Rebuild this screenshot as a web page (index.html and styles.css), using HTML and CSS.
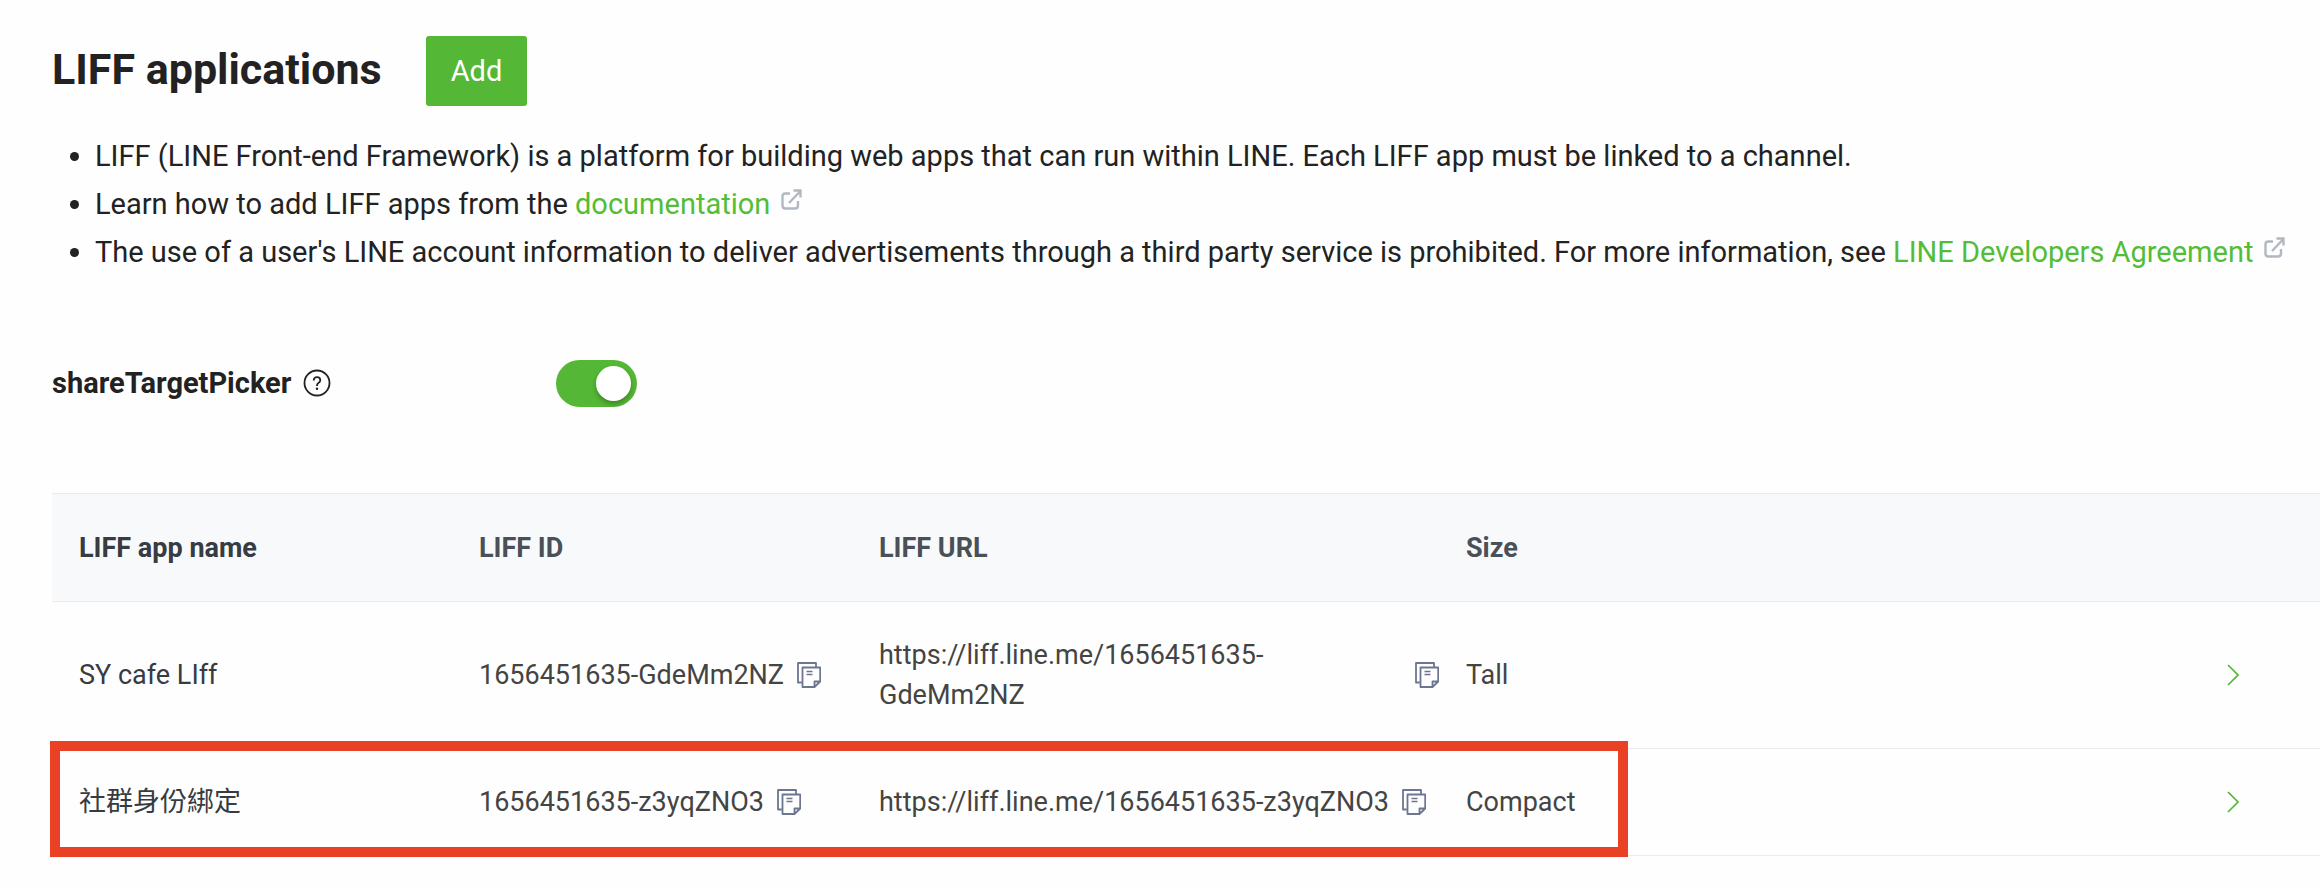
FILE: index.html
```html
<!DOCTYPE html>
<html lang="en">
<head>
<meta charset="utf-8">
<title>LIFF applications</title>
<link rel="stylesheet" href="styles.css">
</head>
<body>
<svg class="sprite" aria-hidden="true">
  <symbol id="external" viewBox="0 0 21 21">
    <path d="M9 4.500H4.500Q1.500 4.500 1.500 7.500V16.500Q1.500 19.500 4.500 19.500H14Q17 19.500 17 16.500V12M8 14L18.500 3M12.500 1.500H19.500V8.500" fill="none" stroke="currentColor" stroke-width="2.400"/>
  </symbol>
  <symbol id="copy" viewBox="0 0 24 26">
    <path d="M4.500 20.500H1V1H19V4.500M5.500 5.500H23.200V19.500L17.500 25H5.500ZM17.500 25V19.500H23.200" fill="none" stroke="currentColor" stroke-width="1.800" stroke-linejoin="round"/>
    <path d="M9.500 9.500H15.500M9.500 12.500H15.500" fill="none" stroke="currentColor" stroke-width="1.500"/>
  </symbol>
  <symbol id="chevron" viewBox="0 0 12 22">
    <path d="M1 1L11 11L1 21" fill="none" stroke="currentColor" stroke-width="1.700"/>
  </symbol>
</svg>
<main class="page">
  <header class="heading">
    <h1 class="title">LIFF applications</h1>
    <button class="add" type="button">Add</button>
  </header>
  <ul class="notes">
    <li>LIFF (LINE Front-end Framework) is a platform for building web apps that can run within LINE. Each LIFF app must be linked to a channel.</li>
    <li>Learn how to add LIFF apps from the <a class="link" href="#documentation">documentation<svg class="external"><use href="#external"/></svg></a></li>
    <li>The use of a user's LINE account information to deliver advertisements through a third party service is prohibited. For more information, see <a class="link" href="#agreement">LINE Developers Agreement<svg class="external"><use href="#external"/></svg></a></li>
  </ul>
  <div class="setting">
    <div class="setting-name">
      <label for="picker">shareTargetPicker</label>
      <button class="help" type="button" aria-label="Help">
        <svg class="help-icon" viewBox="0 0 28 28"><circle cx="14" cy="14" r="12.500" fill="none" stroke="currentColor" stroke-width="1.800"/><path d="M10.700 11.500Q10.700 8.200 14 8.200Q17.300 8.200 17.300 11.200Q17.300 12.800 15.400 14Q14 14.900 14 16.500V17" fill="none" stroke="currentColor" stroke-width="1.800"/><circle cx="14" cy="19.700" r="1.200" fill="currentColor"/></svg>
      </button>
    </div>
    <input class="switch" id="picker" type="checkbox" role="switch" checked>
  </div>
  <table class="apps">
    <colgroup><col class="col-name"><col class="col-id"><col class="col-url"><col class="col-size"><col></colgroup>
    <thead>
      <tr><th class="name">LIFF app name</th><th>LIFF ID</th><th>LIFF URL</th><th>Size</th><th></th></tr>
    </thead>
    <tbody>
      <tr>
        <td class="name">SY cafe LIff</td>
        <td><div class="copyable"><span>1656451635-GdeMm2NZ</span><button class="copy" type="button" aria-label="Copy LIFF ID"><svg class="copy-icon"><use href="#copy"/></svg></button></div></td>
        <td><div class="copyable"><span>https://liff.line.me/1656451635-GdeMm2NZ</span><button class="copy" type="button" aria-label="Copy LIFF URL"><svg class="copy-icon"><use href="#copy"/></svg></button></div></td>
        <td>Tall</td>
        <td class="open"><a class="chevron" href="#app1" aria-label="Open app"><svg class="chevron-icon"><use href="#chevron"/></svg></a></td>
      </tr>
      <tr class="marked">
        <td class="name">社群身份綁定<span class="marker"></span></td>
        <td><div class="copyable"><span>1656451635-z3yqZNO3</span><button class="copy" type="button" aria-label="Copy LIFF ID"><svg class="copy-icon"><use href="#copy"/></svg></button></div></td>
        <td><div class="copyable"><span>https://liff.line.me/1656451635-z3yqZNO3</span><button class="copy" type="button" aria-label="Copy LIFF URL"><svg class="copy-icon"><use href="#copy"/></svg></button></div></td>
        <td>Compact</td>
        <td class="open"><a class="chevron" href="#app2" aria-label="Open app"><svg class="chevron-icon"><use href="#chevron"/></svg></a></td>
      </tr>
    </tbody>
  </table>
</main>
</body>
</html>
```
FILE: styles.css
```css
* { box-sizing: border-box; }
body {
  margin: 0;
  background: #fefefe;
  color: #222;
  font: 29px/48px Roboto, "Noto Sans CJK TC", sans-serif;
}
button { border: 0; padding: 0; background: none; color: inherit; font: inherit; cursor: pointer; }
.sprite { position: absolute; width: 0; height: 0; }
.page { padding: 36px 0 32px 52px; }
.heading { display: flex; align-items: flex-start; gap: 44px; }
.title { margin: 0; font-size: 43px; line-height: 66px; font-weight: 700; }
.add { height: 70px; padding: 0 25px; border-radius: 3px; background: #54b735; color: #fff; }
.notes { margin: 26px 0 0; padding: 0 0 0 43px; }
.link { color: #53bd36; text-decoration: none; }
.external { width: 21px; height: 21px; margin-left: 11px; vertical-align: 4px; color: #b0b8c1; }
.setting { display: flex; align-items: center; margin-top: 83px; }
.setting-name { display: flex; align-items: center; gap: 12px; width: 504px; font-weight: 700; }
.help { display: flex; }
.help-icon { width: 28px; height: 28px; }
.switch {
  appearance: none;
  display: flex;
  align-items: center;
  justify-content: flex-end;
  width: 81px;
  height: 47px;
  margin: 0;
  padding: 6px;
  border-radius: 24px;
  background: #54b735;
}
.switch::before {
  content: "";
  width: 35px;
  height: 35px;
  border-radius: 50%;
  background: #fff;
  box-shadow: 0 3px 5px #0004;
}
.switch:not(:checked) { justify-content: flex-start; background: #b0b8c1; }
.apps {
  width: 100%;
  margin-top: 86px;
  border-collapse: separate;
  border-spacing: 0;
  table-layout: fixed;
  color: #444;
  font-size: 27px;
  line-height: 40px;
}
.col-name, .col-id, .col-size { width: 400px; }
.col-url { width: 587px; }
.apps th, .apps td { padding: 33px 0 33px 27px; border-bottom: 1px solid #e9ebee; text-align: left; }
.apps th { padding-top: 34px; border-top: 1px solid #e9ebee; background: #f8f9fb; color: #495057; font-weight: 700; }
.apps td.name, .apps th.name { color: #373b42; }
.copyable { display: flex; align-items: center; gap: 13px; }
.copy { display: flex; flex: none; }
.copy-icon { width: 24px; height: 26px; color: #6c7691; }
.apps td.open { padding-right: 81px; }
.chevron { display: flex; justify-content: flex-end; color: #54b735; }
.chevron-icon { width: 12px; height: 22px; }
.marked { position: relative; }
.marker {
  position: absolute;
  top: -8px;
  bottom: -1px;
  left: -2px;
  width: 1578px;
  border: 10px solid #ea4025;
  pointer-events: none;
}
```
